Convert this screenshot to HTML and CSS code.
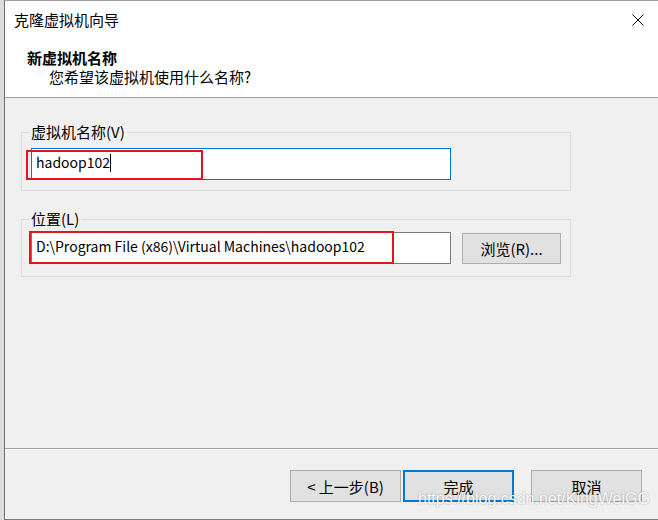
FILE: index.html
```html
<!DOCTYPE html>
<html>
<head>
    <meta charset="UTF-8">
    <title>克隆虚拟机向导</title>
    <link rel="stylesheet" href="styles.css">
</head>
<body>
    <div class="desk"></div>
    <div class="dialog">
        <div class="header">
            <div class="title-row">
                <span class="title">克隆虚拟机向导</span>
                <svg class="close" viewBox="0 0 12 12" width="12" height="12">
                    <path d="M0.5 0.5L11.5 11.5M11.5 0.5L0.5 11.5" stroke="#000" stroke-width="1" fill="none"/>
                </svg>
            </div>
            <div class="heading">新虚拟机名称</div>
            <div class="subheading">您希望该虚拟机使用什么名称?</div>
        </div>

        <div class="main">
            <fieldset class="group group-name">
                <legend>虚拟机名称(V)</legend>
                <div class="field">
                    <div class="textbox focused">hadoop102<span class="caret"></span></div>
                    <div class="mark mark-name"></div>
                </div>
            </fieldset>

            <fieldset class="group group-path">
                <legend>位置(L)</legend>
                <div class="row">
                    <div class="field">
                        <div class="textbox">D:\Program File (x86)\Virtual Machines\hadoop102</div>
                        <div class="mark mark-path"></div>
                    </div>
                    <button class="btn browse">浏览(R)...</button>
                </div>
            </fieldset>
        </div>

        <div class="footer">
            <button class="btn">&lt; 上一步(B)</button>
            <button class="btn primary">完成</button>
            <button class="btn cancel">取消</button>
        </div>

        <div class="watermark">https://blog.csdn.net/KingWeiGG</div>
    </div>
</body>
</html>
```

FILE: styles.css
```css
body {
    margin: 0;
    width: 658px;
    height: 520px;
    display: flex;
    overflow: hidden;
    background-color: #d9d9d9;
    font-family: "Noto Sans CJK SC", sans-serif;
    font-size: 15px;
    color: #000;
}

.desk {
    width: 4px;
    flex-shrink: 0;
    background-color: #dcdcdc;
}

.dialog {
    flex: 1;
    display: flex;
    flex-direction: column;
    position: relative;
    background-color: #f0f0f0;
    border-left: 1px solid #6e6e6e;
    border-top: 1px solid #9c9c9c;
    border-bottom: 1px solid #7a7a7a;
}

/* cabecera blanca */
.header {
    height: 96px;
    background-color: #fff;
    border-bottom: 1px solid #a0a0a0;
}

.title-row {
    display: flex;
    align-items: center;
    justify-content: space-between;
    height: 20px;
    margin-top: 9px;
    padding: 0 14px 0 9px;
}

.title {
    line-height: 20px;
}

.close {
    display: block;
}

.heading {
    font-weight: bold;
    line-height: 18px;
    margin: 19px 0 0 22px;
}

.subheading {
    line-height: 18px;
    margin: 1px 0 0 44px;
}

/* grupos */
.main {
    flex: 1;
    padding: 24px 0 0 16px;
}

.group {
    width: 550px;
    box-sizing: border-box;
    margin: 0;
    padding: 6px 8px 10px 7px;
    border: 1px solid #dcdcdc;
}

.group-path {
    margin-top: 18px;
    padding-top: 3px;
    padding-bottom: 12px;
}

.group legend {
    padding: 0 2px;
    line-height: 20px;
}

.field {
    position: relative;
    margin-left: 2px;
}

.row {
    display: flex;
    align-items: flex-start;
}

.textbox {
    width: 420px;
    height: 32px;
    box-sizing: border-box;
    border: 1px solid #7a7a7a;
    background-color: #fff;
    padding: 0 4px;
    font-size: 14px;
    line-height: 27px;
    white-space: nowrap;
}

.textbox.focused {
    border-color: #0078d7;
}

.caret {
    display: inline-block;
    width: 1px;
    height: 18px;
    background-color: #000;
    vertical-align: -4px;
}

.mark {
    position: absolute;
    border: 2px solid #e3141c;
    box-sizing: border-box;
}

.mark-name {
    left: -5px;
    top: 2px;
    width: 177px;
    height: 30px;
}

.mark-path {
    left: -2px;
    top: -1px;
    width: 365px;
    height: 33px;
}

.btn {
    font-family: inherit;
    font-size: 15px;
    color: #000;
    width: 111px;
    height: 32px;
    padding: 0;
    background-color: #e1e1e1;
    border: 1px solid #adadad;
    box-sizing: border-box;
}

.btn.browse {
    width: 99px;
    height: 31px;
    margin: 1px 0 0 11px;
}

.btn.primary {
    border: 2px solid #0078d7;
}

.footer {
    height: 71px;
    border-top: 1px solid #a0a0a0;
    box-shadow: inset 0 1px 0 #fff;
    display: flex;
    justify-content: flex-end;
    align-items: flex-start;
    padding: 21px 16px 0 0;
    box-sizing: border-box;
    gap: 2px;
}

.btn.cancel {
    margin-left: 15px;
}

.watermark {
    position: absolute;
    left: 413px;
    top: 489px;
    font-family: "Liberation Sans", Arial, sans-serif;
    font-size: 16px;
    color: rgba(255, 255, 255, 0.95);
    text-shadow: 0 0 2px rgba(0, 0, 0, 0.35);
}
```
